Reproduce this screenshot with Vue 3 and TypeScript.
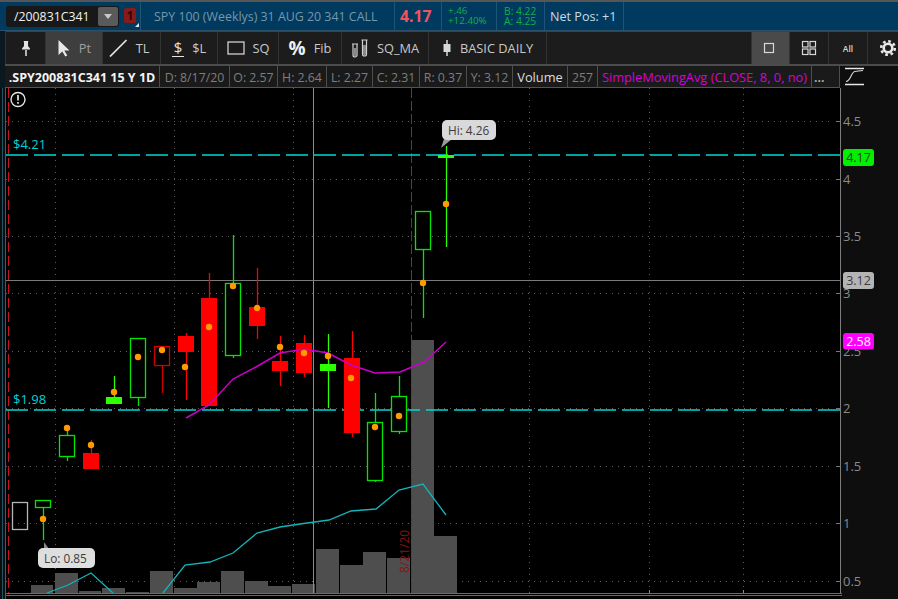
<script setup lang="ts">
interface Cell { label: string; width: number; kind?: string }
interface Tool { label: string; width: number; icon: string; active?: boolean }
interface Candle { x: number; top: number; bottom: number; hi: number; lo: number; color: string; hollow: boolean; dot: [number, number] }

const GREEN = '#00e600'
const RED = '#ff0000'

const tools: Tool[] = [
  { label: '', width: 40, icon: 'pin' },
  { label: 'Pt', width: 57, icon: 'arrow', active: true },
  { label: 'TL', width: 58, icon: 'line' },
  { label: '$L', width: 57, icon: 'dollar' },
  { label: 'SQ', width: 61, icon: 'rect' },
  { label: 'Fib', width: 63, icon: 'pct' },
  { label: 'SQ_MA', width: 87, icon: 'tubes' },
  { label: 'BASIC DAILY', width: 118, icon: 'candle' }
]

const cells: Cell[] = [
  { label: '.SPY200831C341 15 Y 1D', width: 155, kind: 'bold' },
  { label: 'D: 8/17/20', width: 70 },
  { label: 'O: 2.57', width: 48 },
  { label: 'H: 2.64', width: 49 },
  { label: 'L: 2.27', width: 46 },
  { label: 'C: 2.31', width: 47 },
  { label: 'R: 0.37', width: 47 },
  { label: 'Y: 3.12', width: 46 },
  { label: 'Volume', width: 55, kind: 'white' },
  { label: '257', width: 30 },
  { label: 'SimpleMovingAvg (CLOSE, 8, 0, no)', width: 214, kind: 'magenta' },
  { label: '...', width: 28, kind: 'more' }
]

const rows: Array<[number, number, number, number, number, string, boolean, number, number]> = [
  [35, 500, 507, 500, 540, GREEN, true, 43, 519],
  [59, 435, 456, 428, 461, GREEN, true, 67, 428],
  [83, 453, 469, 440, 469, RED, false, 91, 445],
  [106, 397, 404, 376, 404, '#2bff00', false, 114, 392],
  [130, 338, 397, 338, 406, GREEN, true, 138, 357],
  [154, 346, 365, 346, 393, '#d00000', true, 162, 350],
  [178, 336, 352, 333, 400, RED, false, 185, 367],
  [201, 298, 406, 273, 406, RED, false, 209, 327],
  [225, 283, 355, 235, 358, GREEN, true, 233, 286],
  [249, 307, 326, 268, 339, RED, false, 257, 308],
  [272, 361, 371, 336, 386, RED, false, 280, 347],
  [296, 343, 373, 335, 377, RED, false, 304, 353],
  [320, 364, 371, 334, 408, '#2bff00', false, 328, 356],
  [344, 358, 433, 331, 437, RED, false, 351, 378],
  [367, 422, 480, 393, 482, GREEN, true, 375, 427],
  [391, 396, 431, 376, 434, GREEN, true, 399, 416],
  [415, 211, 249, 211, 318, GREEN, true, 423, 283],
  [438, 155, 158, 146, 247, '#2bff00', false, 446, 204]
]
const candles: Candle[] = rows.map(r => ({
  x: r[0], top: r[1], bottom: r[2], hi: r[3], lo: r[4], color: r[5], hollow: r[6], dot: [r[7], r[8]]
}))

const volumes: Array<[number, number, number]> = [
  [31, 53, 585], [55, 78, 573], [79, 101, 591], [102, 125, 588], [126, 149, 592],
  [150, 173, 571], [174, 197, 588], [197, 220, 582], [221, 244, 571], [245, 268, 581],
  [268, 291, 586], [292, 315, 584], [316, 339, 549], [340, 363, 565], [363, 386, 552],
  [387, 410, 558], [411, 434, 340], [434, 457, 536]
]

const gridY = [121, 179, 236, 293, 351, 408, 466, 523, 581]
const gridX = [55, 174, 293, 529, 649, 743]
const ticks = ['4.5', '4', '3.5', '3', '2.5', '2', '1.5', '1', '0.5']

const pts = (list: number[][]) => list.map(p => p.join(',')).join(' ')
const avgA = pts([[47, 593], [68, 585], [91, 573], [113, 593]])
const avgB = pts([[163, 593], [185, 565], [210, 562], [233, 553], [257, 533], [280, 527], [300, 524], [329, 520], [351, 511], [376, 509], [399, 490], [423, 484], [446, 515]])
const sma = pts([[186, 418], [209, 405], [233, 379], [256, 367], [280, 353], [304, 349], [328, 353], [351, 365], [375, 373], [400, 372], [424, 362], [446, 342]])
</script>

<template>
  <div class="app">
    <header class="topbar">
      <div class="symbol">
        <span class="symbol-text">/200831C341</span>
        <span class="symbol-btn"><i class="caret"></i></span>
      </div>
      <div class="link"><span class="link-num">1</span><i class="link-corner"></i></div>
      <div class="sec desc">SPY 100 (Weeklys) 31 AUG 20 341 CALL</div>
      <div class="sec price">4.17</div>
      <div class="sec change"><span>+.46</span><span>+12.40%</span></div>
      <div class="sec bidask"><span>B: 4.22</span><span>A: 4.25</span></div>
      <div class="sec netpos">Net Pos: +1</div>
    </header>

    <nav class="toolbar">
      <div
        v-for="t in tools"
        :key="t.icon"
        class="tool"
        :class="{ active: t.active }"
        :style="{ width: t.width + 'px' }"
      >
        <svg v-if="t.icon === 'pin'" width="14" height="18" viewBox="0 0 14 18">
          <path d="M4.500 2h5l-.5 1v4l2 2.500v1H3v-1l2-2.500V3z" fill="#e4e4e4" />
          <path d="M7 11v6" stroke="#e4e4e4" stroke-width="1.500" />
        </svg>
        <svg v-else-if="t.icon === 'arrow'" width="14" height="18" viewBox="0 0 14 18">
          <path d="M1.500 1v15l3.800-3.500 3 5 2-1-3-5h5.200z" fill="#e8e8e8" />
        </svg>
        <svg v-else-if="t.icon === 'line'" class="line-icon" width="20" height="18" viewBox="0 0 20 18">
          <path d="M2 17.500 L18.500 1" stroke="#e4e4e4" stroke-width="1.700" />
        </svg>
        <span v-else-if="t.icon === 'dollar'" class="dollar">$</span>
        <svg v-else-if="t.icon === 'rect'" width="18" height="14" viewBox="0 0 18 14">
          <rect x="1" y="1" width="16" height="12" fill="none" stroke="#d0d0d0" stroke-width="1.300" />
        </svg>
        <span v-else-if="t.icon === 'pct'" class="pct">%</span>
        <svg v-else-if="t.icon === 'tubes'" width="18" height="20" viewBox="0 0 18 20">
          <g fill="none" stroke="#d0d0d0" stroke-width="1.200">
            <path d="M1 6h6M2 6v11a1.800 1.800 0 0 0 4 0V6" />
            <path d="M10.500 2h6M11.500 2v14a1.800 1.800 0 0 0 4 0V2" />
          </g>
          <path d="M2.500 10h3v7l-1.500 1.500-1.500-1.500zM12 7h3v9l-1.500 1.500L12 16z" fill="#8a8a8a" />
        </svg>
        <svg v-else-if="t.icon === 'candle'" width="10" height="18" viewBox="0 0 10 18">
          <path d="M5 1v16" stroke="#d8d8d8" stroke-width="1.500" />
          <rect x="1.500" y="5" width="7" height="8" fill="#d8d8d8" />
        </svg>
        <span v-if="t.label" class="tool-label">{{ t.label }}</span>
      </div>
      <div class="tool-fill"></div>
      <div class="view view-active">
        <svg width="14" height="14" viewBox="0 0 14 14"><rect x="2.500" y="2.500" width="9" height="9" fill="none" stroke="#d8d8d8" stroke-width="1.200" /></svg>
      </div>
      <div class="view">
        <svg width="16" height="16" viewBox="0 0 16 16">
          <g fill="none" stroke="#d8d8d8" stroke-width="1.200">
            <rect x="1.500" y="1.500" width="5.500" height="5.500" /><rect x="9" y="1.500" width="5.500" height="5.500" />
            <rect x="1.500" y="9" width="5.500" height="5.500" /><rect x="9" y="9" width="5.500" height="5.500" />
          </g>
        </svg>
      </div>
      <div class="view all">All</div>
      <div class="view gear">
        <svg width="18" height="18" viewBox="0 0 18 18">
          <circle cx="9" cy="9" r="6.800" fill="none" stroke="#e8e8e8" stroke-width="2.600" stroke-dasharray="2.700 2.640" />
          <circle cx="9" cy="9" r="4.300" fill="none" stroke="#e8e8e8" stroke-width="2.600" />
        </svg>
      </div>
    </nav>

    <div class="status">
      <div
        v-for="c in cells"
        :key="c.label"
        class="cell"
        :class="c.kind"
        :style="{ width: c.width + 'px' }"
      >{{ c.label }}</div>
      <div class="status-side">
        <svg width="20" height="19" viewBox="0 0 20 19">
          <path d="M0 1.500h19M0 17.500h19" stroke="#e8e8e8" stroke-width="1.500" />
          <path d="M1 14.500c5 0 5-10 9-10 3 0 4-1 8-1" fill="none" stroke="#d8d8d8" stroke-width="1.100" />
        </svg>
      </div>
    </div>

    <svg class="chart" viewBox="0 88 898 511" width="898" height="511">
      <rect x="0" y="88" width="6" height="511" fill="#0d0d0d" />
      <rect x="841" y="88" width="57" height="511" fill="#0e0e0e" />
      <path d="M2.500 88V599" stroke="#1f5566" stroke-width="1" />
      <path d="M5.500 88V599" stroke="#555" stroke-width="1" />

      <g stroke="#5c5c5c" stroke-width="1" stroke-dasharray="1 5">
        <line v-for="y in gridY" :key="'h' + y" x1="6" :y1="y + 0.5" x2="834" :y2="y + 0.5" />
        <line v-for="x in gridX" :key="'v' + x" :x1="x + 0.5" y1="88" :x2="x + 0.5" y2="593" />
      </g>

      <rect
        v-for="v in volumes"
        :key="v[0]"
        :x="v[0]"
        :y="v[2]"
        :width="v[1] - v[0]"
        :height="593 - v[2]"
        fill="#4e4e4e"
      />

      <line x1="313.500" y1="88" x2="313.500" y2="593" stroke="#8c8c8c" />
      <line x1="6" y1="280.500" x2="840" y2="280.500" stroke="#7a7a7a" />
      <line x1="8.500" y1="88" x2="8.500" y2="593" stroke="#c0142a" stroke-dasharray="10 4" />
      <line x1="411.500" y1="88" x2="411.500" y2="593" stroke="#c01020" stroke-dasharray="10 3" />

      <g stroke="#00d8d8" stroke-width="1.400" stroke-dasharray="22 6">
        <line x1="6" y1="155" x2="840" y2="155" />
        <line x1="6" y1="410" x2="840" y2="410" />
      </g>
      <text class="level" x="13" y="149">$4.21</text>
      <text class="level" x="13" y="404">$1.98</text>

      <polyline :points="avgA" class="avg" />
      <polyline :points="avgB" class="avg" />
      <text class="date" transform="translate(409 573) rotate(-90)">8/21/20</text>

      <rect x="12.500" y="502.500" width="15" height="27" fill="none" stroke="#b5b5b5" stroke-width="1.300" />

      <g v-for="c in candles" :key="c.x">
        <line :x1="c.x + 8.500" :y1="c.hi" :x2="c.x + 8.500" :y2="c.lo" :stroke="c.color" stroke-width="1.300" />
        <rect
          v-if="c.hollow"
          :x="c.x + 0.500"
          :y="c.top + 0.500"
          width="15"
          :height="c.bottom - c.top"
          fill="#000"
          :stroke="c.color"
          stroke-width="1.300"
        />
        <rect v-else :x="c.x" :y="c.top" width="16" :height="c.bottom - c.top" :fill="c.color" />
      </g>

      <polyline :points="sma" fill="none" stroke="#c800c8" stroke-width="1.500" />

      <circle v-for="c in candles" :key="'d' + c.x" :cx="c.dot[0]" :cy="c.dot[1]" r="3.200" fill="#ff9a00" />

      <path d="M441 148l3-9h8z" fill="#9a9a9a" />
      <rect x="442" y="120" width="54" height="20" rx="5" fill="#d9d9d9" />
      <text class="tip" x="448" y="135">Hi: 4.26</text>

      <path d="M44 542l5 7h-5z" fill="#8a8a8a" />
      <rect x="38" y="548" width="57" height="20" rx="5" fill="#dedede" />
      <text class="tip" x="44" y="563">Lo: 0.85</text>

      <circle cx="18" cy="99.500" r="7" fill="none" stroke="#e6e6e6" stroke-width="1.400" />
      <path d="M18 95v5.500M18 102v1.800" stroke="#e6e6e6" stroke-width="1.700" />

      <line x1="840.500" y1="88" x2="840.500" y2="593" stroke="#7d7d7d" />
      <g v-for="(t, i) in ticks" :key="t">
        <line x1="836" :y1="gridY[i] + 0.500" x2="841" :y2="gridY[i] + 0.500" stroke="#777" />
        <text class="axis" x="843" :y="gridY[i] + 4.500">{{ t }}</text>
      </g>

      <rect x="843" y="149" width="31" height="17" rx="3" fill="#00f000" />
      <text class="tag" x="858.500" y="162" fill="#333">4.17</text>
      <rect x="843" y="272" width="31" height="17" rx="3" fill="#b4b4b4" />
      <text class="tag" x="858.500" y="285" fill="#3a3a3a">3.12</text>
      <rect x="843" y="333" width="31" height="16.500" rx="3" fill="#ff00ff" />
      <text class="tag" x="858.500" y="346" fill="#fff">2.58</text>

      <path d="M6 593.500H842M6 595.500H842" stroke="#6a6a6a" />
      <path d="M649.500 590v3M743.500 590v3" stroke="#8a8a8a" />
    </svg>
  </div>
</template>

<style scoped>
.app {
  width: 898px;
  height: 599px;
  overflow: hidden;
  display: flex;
  flex-direction: column;
  background: #0a1820;
  font-family: "Open Sans", "Liberation Sans", sans-serif;
}

.topbar {
  height: 28px;
  margin-top: 2px;
  box-shadow: 0 -2px 0 #565656;
  background: #003a5e;
  display: flex;
  align-items: center;
  flex: none;
  padding-left: 6px;
  border-bottom: 1px solid #2c5168;
}
.symbol {
  width: 113px;
  height: 21px;
  background: #181818;
  border-radius: 3px;
  display: flex;
  align-items: center;
  justify-content: space-between;
  padding: 0 1px 0 8px;
  box-sizing: border-box;
}
.symbol-text {
  color: #f2f2f2;
  font-size: 12.300px;
}
.symbol-btn {
  width: 20px;
  height: 19px;
  background: #5a5a5a;
  border-radius: 2px;
  display: flex;
  align-items: center;
  justify-content: center;
}
.caret {
  width: 0;
  height: 0;
  border-left: 4px solid transparent;
  border-right: 4px solid transparent;
  border-top: 5px solid #c8c8c8;
}
.link {
  position: relative;
  width: 12px;
  height: 15px;
  margin-left: 5px;
  margin-right: 4px;
  margin-bottom: 1px;
  background: #8a1a1a;
  border-radius: 2px;
  color: #2a0505;
  font-size: 12px;
  font-weight: 700;
  line-height: 15px;
  text-align: center;
}
.link-corner {
  position: absolute;
  right: -3px;
  bottom: -4px;
  border-left: 4px solid transparent;
  border-bottom: 4px solid #e8e8e8;
}
.sec {
  height: 100%;
  display: flex;
  align-items: center;
  box-sizing: border-box;
  border-left: 1px solid #1d5478;
}
.desc {
  width: 254px;
  padding-left: 13px;
  color: #7498ae;
  font-size: 12.400px;
  white-space: nowrap;
}
.price {
  width: 47px;
  padding-left: 5px;
  color: #f4515e;
  font-size: 15.800px;
  font-weight: 700;
}
.change,
.bidask {
  flex-direction: column;
  align-items: flex-start;
  justify-content: center;
  color: #12b04a;
  font-size: 9.800px;
  line-height: 10.500px;
  white-space: nowrap;
}
.change {
  width: 55px;
  padding-left: 6px;
}
.bidask {
  width: 48px;
  padding-left: 7px;
  font-size: 10.300px;
}
.netpos {
  width: 80px;
  padding-left: 5px;
  color: #c9dbe6;
  font-size: 12.600px;
  border-right: 1px solid #1d5478;
  white-space: nowrap;
}

.toolbar {
  height: 32px;
  flex: none;
  display: flex;
  margin-left: 5px;
  border-left: 1px solid #333;
  background: #1c1c1c;
  border-top: 1px solid #3a4248;
}
.tool {
  height: 100%;
  box-sizing: border-box;
  display: flex;
  align-items: center;
  justify-content: center;
  gap: 8px;
  border-right: 1px solid #333;
  background: #1c1c1c;
}
.tool.active {
  background: #3e3e3e;
}
.tool-label {
  color: #c9c9c9;
  font-size: 12.800px;
  white-space: nowrap;
}
.active .tool-label {
  color: #9e9e9e;
}
.line-icon {
  margin-left: -6px;
}
.dollar {
  color: #e4e4e4;
  font-size: 15px;
  line-height: 17px;
  border-bottom: 1.500px solid #e4e4e4;
  padding: 0 2px;
}
.pct {
  color: #f0f0f0;
  font-size: 19px;
  font-weight: 700;
}
.tool-fill {
  flex: 1;
}
.view {
  width: 39px;
  height: 100%;
  box-sizing: border-box;
  display: flex;
  align-items: center;
  justify-content: center;
  border-left: 1px solid #333;
}
.view-active {
  width: 38px;
  background: #4a4a4a;
  padding-right: 3px;
}
.all {
  color: #d8d8d8;
  font-size: 8.500px;
  font-weight: 600;
}
.gear {
  width: 31px;
  padding-left: 9px;
}

.status {
  height: 24px;
  flex: none;
  display: flex;
  margin-left: 5px;
  background: #1a1a1a;
  border-top: 2px solid #4c4c4c;
  box-sizing: border-box;
  box-shadow: inset 0 -1px 0 #555;
}
.cell {
  flex: none;
  box-sizing: border-box;
  height: 100%;
  display: flex;
  align-items: center;
  justify-content: center;
  border-right: 1px solid #4d4d4d;
  color: #7e7e7e;
  font-size: 12.300px;
  white-space: nowrap;
}
.cell.bold {
  color: #f4f4f4;
  font-weight: 700;
  font-size: 12.500px;
}
.cell.white {
  color: #dcdcdc;
  font-size: 12.800px;
}
.cell.magenta {
  color: #d800d8;
  font-size: 12.800px;
}
.cell.more {
  justify-content: flex-start;
  padding-left: 2px;
  color: #a8a8a8;
  font-weight: 700;
}
.status-side {
  flex: 1;
  height: 22px;
  background: #0e0e0e;
  padding: 1px 0 0 5px;
  box-sizing: border-box;
  box-shadow: 0 1px 0 #0e0e0e;
}
.status-side svg {
  display: block;
}

.chart {
  display: block;
  flex: none;
  background: #000;
}
.level {
  fill: #00d0d8;
  font-size: 13px;
}
.avg {
  fill: none;
  stroke: #12b4b8;
  stroke-width: 1.300;
}
.date {
  fill: #8a1414;
  font-size: 12px;
}
.tip {
  fill: #3c3c3c;
  font-size: 11.800px;
}
.axis {
  fill: #8a8a8a;
  font-size: 13px;
}
.tag {
  font-size: 12.500px;
  text-anchor: middle;
}
</style>
